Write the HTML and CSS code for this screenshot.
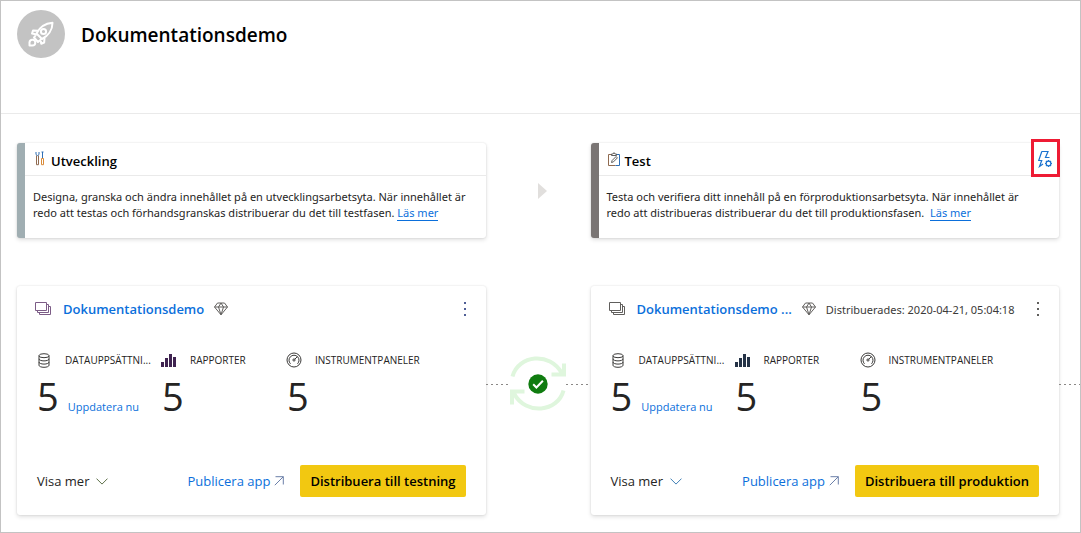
FILE: index.html
```html
<!DOCTYPE html>
<html lang="sv">
<head>
<meta charset="utf-8">
<title>Dokumentationsdemo</title>
<meta name="viewport" content="width=device-width, initial-scale=1">
<link rel="stylesheet" href="styles.css">
</head>
<body>
<svg class="sprite" aria-hidden="true">
  <symbol id="stack" viewBox="0 0 17 14">
    <path d="M.5.5h11v8H.5zM11.500 2.500h2v8h-11v-2M13.500 4.500h2v8h-11v-2"/>
  </symbol>
  <symbol id="diamond" viewBox="0 0 14 14">
    <path d="M3.500 1h7l3 4L7 12.800.5 5zM.5 5h13M4.500 5L7 12.800 9.500 5M4.500 5L7 1l2.500 4"/>
  </symbol>
  <symbol id="database" viewBox="0 0 12 15">
    <ellipse cx="6" cy="2.700" rx="5" ry="2"/>
    <path d="M1 2.700v9.600c0 1.100 2.200 2 5 2s5-.9 5-2V2.700M1 5.900c0 1.100 2.200 2 5 2s5-.9 5-2M1 9.100c0 1.100 2.200 2 5 2s5-.9 5-2"/>
  </symbol>
  <symbol id="bars" viewBox="0 0 16 14">
    <path d="M0 9h3v5H0zM4 5h3v9H4zM8 1h3v13H8zM12 4h3v10h-3z"/>
  </symbol>
  <symbol id="gauge" viewBox="0 0 16 16">
    <circle cx="8" cy="8" r="7"/>
    <path d="M4.500 11.800A5 5 0 1 1 11.500 11.800M8.700 7.300L11.400 4.600"/>
    <circle cx="8" cy="8" r="1.100"/>
  </symbol>
  <symbol id="chevron" viewBox="0 0 12 7">
    <path d="M.5.6L6 6.100 11.500.6"/>
  </symbol>
  <symbol id="out" viewBox="0 0 10 10">
    <path d="M.8 9.200L9.300.7M1.500.7h7.800v7.800"/>
  </symbol>
  <symbol id="more" viewBox="0 0 2 14">
    <path d="M0 0h2v2H0zM0 6h2v2H0zM0 12h2v2H0z"/>
  </symbol>
</svg>

<div class="page">
  <header class="top">
    <span class="avatar">
      <svg width="26" height="26" viewBox="0 0 26 26" aria-hidden="true">
        <path d="M8.500 12.500C11.500 6.500 16.500 2.500 24.500 1.800 24.500 9 20 15 14 18z"/>
        <circle cx="15.500" cy="10.500" r="2.600"/>
        <path d="M10 9.800L5 9.500 4 12.500l4.500 1M16.500 17l-.3 4.500-3 1.200L12.500 18M8.500 13l-2.500 3.500 4 4.500 3.500-3"/>
        <path d="M1.500 24.500v-3.200a2.900 2.900 0 1 1 2.900 3.200z"/>
      </svg>
    </span>
    <h1 class="top-title">Dokumentationsdemo</h1>
  </header>

  <main class="pipeline">
    <section class="stage stage-dev">
      <div class="stage-head">
        <svg class="stage-icon" width="10" height="16" viewBox="0 0 10 16" aria-hidden="true">
          <path class="ink-blue" d="M1 1v2.500l1.200 1h.600l1.200-1V1M7.500 1v6M6.500 1h2"/>
          <path class="ink-brown" d="M1.500 4.500v9.200h2V4.500"/>
          <path class="ink-orange" d="M6.500 7.500h2v6.200h-2z"/>
        </svg>
        <h2 class="stage-title">Utveckling</h2>
      </div>
      <p class="stage-text">Designa, granska och ändra innehållet på en utvecklingsarbetsyta. När innehållet är<br>redo att testas och förhandsgranskas distribuerar du det till testfasen. <a class="more-link" href="#">Läs mer</a></p>
    </section>

    <div class="next">
      <svg width="9" height="16" viewBox="0 0 9 16" aria-hidden="true"><path d="M0 0l9 8-9 8z"/></svg>
    </div>

    <section class="stage stage-test">
      <div class="stage-head">
        <svg class="stage-icon" width="12" height="14" viewBox="0 0 12 14" aria-hidden="true">
          <path class="ink-brown" d="M3.500 2.500h-3v11h7"/>
          <path class="ink-blue" d="M8.500 2.500h3v11h-4"/>
          <path class="ink-gray" d="M3.500 3.500v-1.500h1.500L6 .6l1 1.400h1.500v1.500zM3.500 10.500l.6-2 4-4 1.300 1.400-4 4z"/>
        </svg>
        <h2 class="stage-title">Test</h2>
        <button class="rules" type="button" aria-label="Distributionsinställningar">
          <svg width="16" height="19" viewBox="0 0 16 19" aria-hidden="true">
            <path d="M3.800 2.500h6.200L7.500 8.500h4M3.800 2.500L.7 11.500h3L1.500 17.500l3.500-2.500"/>
            <circle cx="10.500" cy="14.500" r="2.400"/>
            <path d="M10.500 11v1.100M10.500 16.900V18M7 14.500h1.100M12.900 14.500H14M8 12l.8.8M12.200 16.200l.8.8M8 17l.8-.8M12.200 12.800l.8-.8"/>
          </svg>
        </button>
      </div>
      <p class="stage-text">Testa och verifiera ditt innehåll på en förproduktionsarbetsyta. När innehållet är<br>redo att distribueras distribuerar du det till produktionsfasen. &nbsp;<a class="more-link" href="#">Läs mer</a></p>
    </section>

    <article class="card card-dev">
      <div class="card-head">
        <svg class="line stack stack-purple" width="17" height="14" aria-hidden="true"><use href="#stack"/></svg>
        <a class="card-title" href="#">Dokumentationsdemo</a>
        <svg class="line" width="14" height="14" aria-hidden="true"><use href="#diamond"/></svg>
        <button class="menu menu-blue" type="button" aria-label="Fler alternativ"><svg width="2" height="14" aria-hidden="true"><use href="#more"/></svg></button>
      </div>
      <div class="stats">
        <div class="stat">
          <div class="stat-label"><svg class="line dark" width="12" height="15" aria-hidden="true"><use href="#database"/></svg><span>DATAUPPSÄTTNI...</span></div>
          <div class="stat-value"><span class="number">5</span><a class="update" href="#">Uppdatera nu</a></div>
        </div>
        <div class="stat">
          <div class="stat-label"><svg class="bars-purple" width="16" height="14" aria-hidden="true"><use href="#bars"/></svg><span>RAPPORTER</span></div>
          <div class="stat-value"><span class="number">5</span></div>
        </div>
        <div class="stat">
          <div class="stat-label"><svg class="line dark" width="16" height="16" aria-hidden="true"><use href="#gauge"/></svg><span>INSTRUMENTPANELER</span></div>
          <div class="stat-value"><span class="number">5</span></div>
        </div>
      </div>
      <div class="card-foot">
        <button class="expand" type="button">Visa mer <svg class="line" width="12" height="7" aria-hidden="true"><use href="#chevron"/></svg></button>
        <a class="publish" href="#">Publicera app <svg class="line" width="10" height="10" aria-hidden="true"><use href="#out"/></svg></a>
        <button class="deploy" type="button">Distribuera till testning</button>
      </div>
    </article>

    <div class="link">
      <span class="dash"></span>
      <svg width="56" height="56" viewBox="0 0 56 56" role="img" aria-label="Synkroniserad">
        <path class="sync" d="M2.500 20.500C8 -1 40 -5 52 17.500M54 7.500V18.500H41.500M53.500 34.500C48 56 16 60 4 37.500M2 48.500V35.500H14.500"/>
        <circle class="ok" cx="28" cy="28" r="9.700"/>
        <path class="tick" d="M23.200 28.300l3.200 3.200 6.500-6.700"/>
      </svg>
      <span class="dash"></span>
    </div>

    <article class="card card-test">
      <div class="card-head">
        <svg class="line stack" width="17" height="14" aria-hidden="true"><use href="#stack"/></svg>
        <a class="card-title" href="#">Dokumentationsdemo ...</a>
        <svg class="line" width="14" height="14" aria-hidden="true"><use href="#diamond"/></svg>
        <span class="deployed">Distribuerades: 2020-04-21, 05:04:18</span>
        <button class="menu" type="button" aria-label="Fler alternativ"><svg width="2" height="14" aria-hidden="true"><use href="#more"/></svg></button>
      </div>
      <div class="stats">
        <div class="stat">
          <div class="stat-label"><svg class="line dark" width="12" height="15" aria-hidden="true"><use href="#database"/></svg><span>DATAUPPSÄTTNI...</span></div>
          <div class="stat-value"><span class="number">5</span><a class="update" href="#">Uppdatera nu</a></div>
        </div>
        <div class="stat">
          <div class="stat-label"><svg class="bars-navy" width="16" height="14" aria-hidden="true"><use href="#bars"/></svg><span>RAPPORTER</span></div>
          <div class="stat-value"><span class="number">5</span></div>
        </div>
        <div class="stat">
          <div class="stat-label"><svg class="line dark" width="16" height="16" aria-hidden="true"><use href="#gauge"/></svg><span>INSTRUMENTPANELER</span></div>
          <div class="stat-value"><span class="number">5</span></div>
        </div>
      </div>
      <div class="card-foot">
        <button class="expand expand-blue" type="button">Visa mer <svg class="line" width="12" height="7" aria-hidden="true"><use href="#chevron"/></svg></button>
        <a class="publish" href="#">Publicera app <svg class="line" width="10" height="10" aria-hidden="true"><use href="#out"/></svg></a>
        <button class="deploy" type="button">Distribuera till produktion</button>
      </div>
    </article>

    <div class="link link-end"><span class="dash"></span></div>
  </main>
</div>
</body>
</html>
```
FILE: styles.css
```css
* { box-sizing: border-box; }

body {
  margin: 0;
  background: #fff;
  color: #252423;
  font-family: "Open Sans", "Noto Sans", sans-serif;
  font-size: 12px;
}

h1, h2, p { margin: 0; }
a { color: #0b6fdb; text-decoration: none; }
button { border: 0; padding: 0; background: none; font-family: inherit; cursor: pointer; }
svg { flex: none; display: block; }

.sprite { position: absolute; width: 0; height: 0; }

.page { min-height: 100vh; border: 1px solid #c3c3c3; }

.top {
  display: flex;
  align-items: flex-start;
  gap: 16px;
  height: 113px;
  padding: 9px 16px;
  border-bottom: 1px solid #eaeaea;
}
.avatar {
  display: flex;
  align-items: center;
  justify-content: center;
  width: 48px;
  height: 48px;
  border-radius: 50%;
  background: #c3c3c3;
}
.avatar path, .avatar circle { fill: none; stroke: #fff; stroke-width: 2; stroke-linejoin: round; }
.top-title { font-size: 19px; font-weight: 600; line-height: 50px; color: #000; }

.pipeline {
  display: grid;
  grid-template-columns: 1fr 105px 1fr 21px;
  row-gap: 48px;
  padding: 29px 0 16px 16px;
}

.stage, .card {
  border-radius: 3px;
  background: #fff;
  box-shadow: 0 0 2px rgba(0, 0, 0, .12), 0 2px 4px rgba(0, 0, 0, .12);
}
.stage { border-left: 8px solid #a0aeb2; min-height: 95px; min-width: 0; }
.stage-test { border-left-color: #7a7574; }
.stage-head {
  position: relative;
  display: flex;
  align-items: center;
  gap: 6px;
  height: 33px;
  padding: 0 10px;
  border-bottom: 1px solid #eaeaea;
}
.stage-icon path { fill: none; }
.ink-blue { stroke: #2f6fb5; }
.ink-brown { stroke: #8f6a50; }
.ink-orange { stroke: #d98b3a; }
.ink-gray { stroke: #605e5c; }
.stage-test .stage-head { gap: 5px; padding-left: 9px; }
.stage-title { padding-top: 4px; font-size: 13px; font-weight: 600; line-height: 28px; color: #000; }
.stage-text { padding: 13px 8px; font-family: "Noto Sans", "Open Sans", sans-serif; font-size: 11px; line-height: 16px; white-space: nowrap; }
.more-link { border-bottom: 1px solid #0b6fdb; }

.rules {
  position: absolute;
  top: -4px;
  right: -1px;
  display: flex;
  align-items: center;
  justify-content: center;
  width: 29px;
  height: 38px;
  border: 3px solid #ee1b34;
  background: #fff;
}
.rules path, .rules circle { fill: none; stroke: #1b72cf; stroke-width: 1.2; }

.next { grid-column: 2; padding-top: 40px; padding-left: 52px; }
.next path { fill: #e1dfdd; }

.card { grid-row: 2; min-width: 0; display: flex; flex-direction: column; padding: 13px 20px 18px 18px; min-height: 229px; }
.card-dev { grid-column: 1; }
.card-test { grid-column: 3; }

.card-head { display: flex; align-items: center; height: 20px; gap: 10px; white-space: nowrap; }
.line { fill: none; stroke: #605e5c; }
.dark { stroke: #3b3a39; }
.stack { margin-right: 1px; }
.stack-purple { stroke: #7c5c86; }
.card-title { font-size: 13px; font-weight: 600; line-height: 20px; }
.deployed { color: #3b3a39; font-family: "Noto Sans", "Open Sans", sans-serif; font-size: 11px; }
.menu { display: flex; justify-content: flex-end; margin-left: auto; padding-left: 4px; fill: #605e5c; }
.menu-blue { fill: #4f5f96; }

.stats { display: grid; grid-template-columns: 125px 125px 1fr; margin-top: 31px; }
.stat-label { display: grid; grid-template-columns: 18px 1fr; column-gap: 12px; align-items: center; justify-items: center; height: 20px; font-size: 10px; }
.stat-label span { justify-self: start; white-space: nowrap; }
.stat-value { display: flex; align-items: baseline; gap: 9px; padding-left: 2px; }
.number { font-size: 38px; line-height: 52px; }
.update { font-size: 11px; white-space: nowrap; }
.bars-purple { fill: #3f2350; }
.bars-navy { fill: #253347; }

.card-foot { display: flex; align-items: center; margin-top: auto; white-space: nowrap; }
.expand { display: flex; align-items: center; gap: 7px; padding-left: 2px; font-size: 13px; color: #252423; }
.expand .line { stroke: #5d7048; }
.expand-blue .line { stroke: #3f7fb5; }
.publish { display: flex; align-items: center; gap: 4px; margin-left: auto; margin-right: 16px; font-size: 13px; }
.publish .line { stroke: #6b7fa8; }
.deploy { height: 32px; padding: 0 10px; border-radius: 2px; background: #f2c811; font-size: 13px; font-weight: 600; color: #000; }

.link { grid-column: 2; grid-row: 2; display: flex; align-items: center; justify-content: space-between; height: 56px; margin-top: 70px; }
.link-end { grid-column: 4; }
.dash { flex: 1; height: 1px; background: repeating-linear-gradient(90deg, #8a8886 0 2px, transparent 2px 5px); }
.sync { fill: none; stroke: #dff6dd; stroke-width: 4; }
.ok { fill: #107c10; }
.tick { fill: none; stroke: #fff; stroke-width: 2; }
```
